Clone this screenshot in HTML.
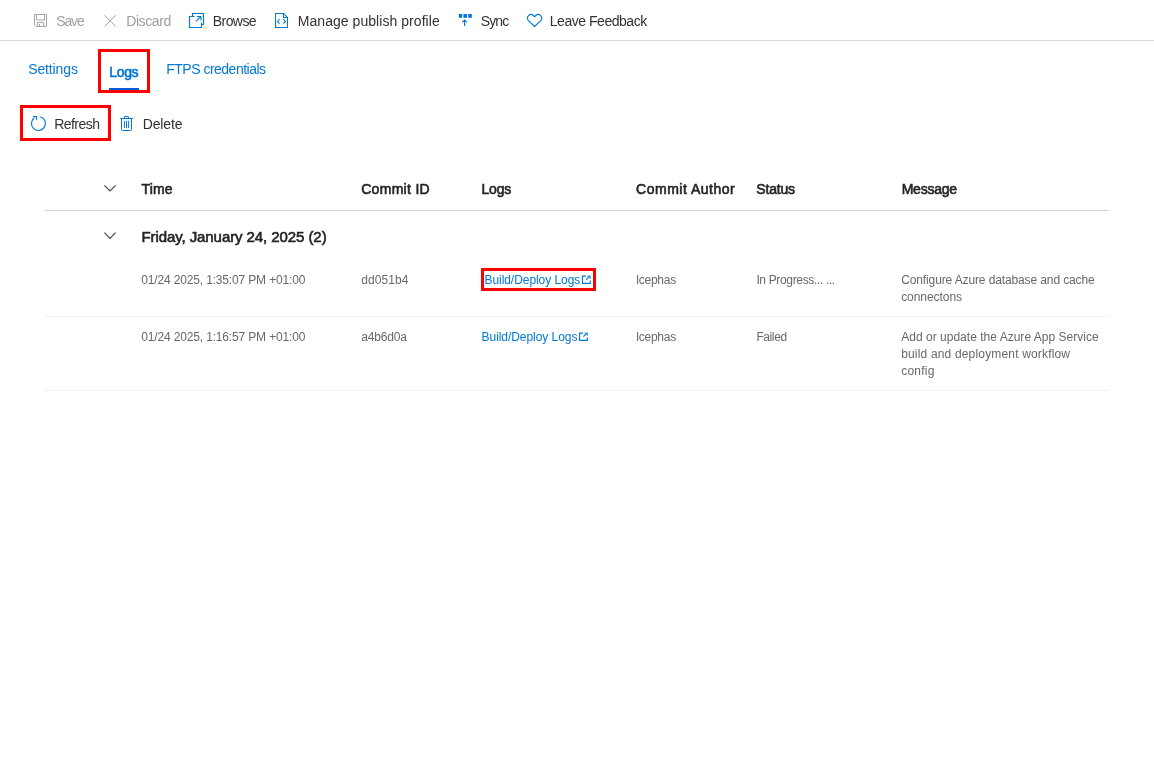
<!DOCTYPE html>
<html lang="en">
<head>
<meta charset="utf-8">
<title>Deployment Center - Logs</title>
<style>
html,body{margin:0;padding:0;background:#fff;}
body{width:1154px;height:759px;position:relative;overflow:hidden;font-family:"Liberation Sans",sans-serif;}
.t{position:absolute;white-space:pre;line-height:20px;font-family:"Liberation Sans",sans-serif;}
.t{font-weight:400}
.sb{-webkit-text-stroke:0.6px currentColor;}
.ln{position:absolute;height:1px;}
.rb{position:absolute;border:3px solid #ff0000;box-sizing:border-box;}
svg.ic{position:absolute;left:0;top:0;width:1154px;height:759px;overflow:visible;}
</style>
</head>
<body>
<div id="root" style="position:absolute;left:0;top:0;width:1154px;height:759px;will-change:transform">
<!-- toolbar separator -->
<div class="ln" style="left:0;top:40px;width:1154px;background:#d6d6d6"></div>
<!-- table lines -->
<div class="ln" style="left:45px;top:210px;width:1064px;background:#cbd3dc"></div>
<div class="ln" style="left:45px;top:316px;width:1064px;background:#f0f0f0"></div>
<div class="ln" style="left:45px;top:390px;width:1064px;background:#f0f0f0"></div>
<!-- active tab underline -->
<div style="position:absolute;left:109px;top:88px;width:30px;height:2px;background:#015cda"></div>
<!-- red highlight boxes -->
<div class="rb" style="left:98px;top:49px;width:52px;height:44px"></div>
<div class="rb" style="left:20px;top:105px;width:91px;height:36px"></div>
<div class="rb" style="left:481px;top:268px;width:115px;height:23px"></div>

<svg class="ic" viewBox="0 0 1154 759" fill="none" stroke-linecap="butt" stroke-linejoin="miter">
 <!-- save (disabled) -->
 <g stroke="#a8a6a4" stroke-width="1">
  <path d="M34.5 14.5 H46.5 V26.5 H36 L34.5 25 Z"/>
  <path d="M36.5 14.5 V20 H44.5 V14.5"/>
  <path d="M37.5 26.5 V22.5 H43.5 V26.5"/>
  <path d="M39.5 26.5 V24"/>
 </g>
 <!-- discard X (disabled) -->
 <g stroke="#a19f9d" stroke-width="1">
  <path d="M104.5 15.2 L115.7 26.4 M115.7 15.2 L104.5 26.4"/>
 </g>
 <!-- browse -->
 <g stroke="#0078d4" stroke-width="1.15">
  <path d="M194.5 16.5 H189.5 V27.5 H201.5 V22.5"/>
  <path d="M192.5 16.5 V13.5 H203.5 V24.5 H201.5"/>
  <path d="M195.8 21.4 L200.8 16.6 M197 16.5 H201 V20.5"/>
 </g>
 <!-- manage publish profile -->
 <g stroke="#0078d4" stroke-width="1.05">
  <path d="M275.5 13.5 H283.5 L287.5 17.5 V27.5 H275.5 Z"/>
  <path d="M283.5 13.5 V17.5 H287.5"/>
  <path d="M279.6 19.2 L277.5 21.4 L279.6 23.6 M283.4 19.2 L285.5 21.4 L283.4 23.6"/>
 </g>
 <!-- sync -->
 <g fill="#0078d4" stroke="none">
  <rect x="458.8" y="14" width="3.4" height="3.8"/>
  <rect x="463.4" y="14" width="3.6" height="3.8"/>
  <rect x="468.2" y="14" width="3.6" height="3.8"/>
 </g>
 <g stroke="#0078d4" stroke-width="1.15">
  <path d="M464.6 20 V26 M462.4 22.2 L464.6 20 L466.8 22.2"/>
 </g>
 <!-- heart -->
 <g stroke="#0078d4" stroke-width="1.15">
  <path d="M534.6 26.5 L528.4 20.6 C527.1 19.3 527.1 16.9 528.5 15.6 C529.9 14.2 532 14.2 533.4 15.5 L534.6 16.6 L535.8 15.5 C537.2 14.2 539.3 14.2 540.7 15.6 C542.1 16.9 542.1 19.3 540.8 20.6 Z"/>
 </g>
 <!-- refresh -->
 <g stroke="#0078d4" stroke-width="1.15">
  <path d="M40.3 116.7 A7 7 0 1 1 34.6 117.6"/>
  <path d="M33 116.5 H36.6 V119.8"/>
 </g>
 <!-- delete -->
 <g stroke="#0078d4" stroke-width="1">
  <path d="M120.2 118.5 H132.8"/>
  <path d="M124.5 118.5 V117 Q124.5 116.5 125 116.5 H128 Q128.5 116.5 128.5 117 V118.5"/>
  <path d="M121.5 118.5 V129.5 Q121.5 130.5 122.5 130.5 H130.5 Q131.5 130.5 131.5 129.5 V118.5"/>
  <path d="M124.4 120.8 V128 M126.5 120.8 V128 M128.6 120.8 V128"/>
 </g>
 <!-- chevrons -->
 <g stroke="#484644" stroke-width="1.2">
  <path d="M104.4 185.4 L110 191 L115.6 185.4"/>
  <path d="M104.4 232.7 L110 238.3 L115.6 232.7"/>
 </g>
 <!-- external-link icons -->
 <g stroke="#0078d4" stroke-width="1.15" transform="translate(2.9 -57)">
  <path d="M583 333.1 H579.6 V340.3 H587.3 V337.6"/>
  <path d="M583.3 336.7 L586.9 333.3"/>
  <path d="M584.4 333.1 H587.3 V336" stroke-opacity="0.7"/>
 </g>
 <g stroke="#0078d4" stroke-width="1.15">
  <path d="M583 333.1 H579.6 V340.3 H587.3 V337.6"/>
  <path d="M583.3 336.7 L586.9 333.3"/>
  <path d="M584.4 333.1 H587.3 V336" stroke-opacity="0.7"/>
 </g>
</svg>

<span class="t" style="left:56.16px;top:11.15px;font-size:14px;color:#a19f9d;letter-spacing:-1.081px">Save</span>
<span class="t" style="left:126.16px;top:11.15px;font-size:14px;color:#a19f9d;letter-spacing:-0.381px">Discard</span>
<span class="t" style="left:212.76px;top:11.15px;font-size:14px;color:#323130;letter-spacing:-0.561px">Browse</span>
<span class="t" style="left:297.76px;top:11.15px;font-size:14px;color:#323130;letter-spacing:0.053px">Manage publish profile</span>
<span class="t" style="left:480.76px;top:11.15px;font-size:14px;color:#323130;letter-spacing:-0.882px">Sync</span>
<span class="t" style="left:549.76px;top:11.15px;font-size:14px;color:#323130;letter-spacing:-0.465px">Leave Feedback</span>
<span class="t" style="left:28.16px;top:59.15px;font-size:14px;color:#0078d4;letter-spacing:-0.116px">Settings</span>
<span class="t sb" style="left:109.36px;top:62.15px;font-size:14px;color:#0078d4;letter-spacing:-0.393px">Logs</span>
<span class="t" style="left:166.26px;top:59.15px;font-size:14px;color:#0078d4;letter-spacing:-0.506px">FTPS credentials</span>
<span class="t" style="left:54.16px;top:113.95px;font-size:14px;color:#323130;letter-spacing:-0.525px">Refresh</span>
<span class="t" style="left:142.76px;top:113.95px;font-size:14px;color:#323130;letter-spacing:-0.138px">Delete</span>
<span class="t sb" style="left:141.46px;top:178.95px;font-size:14px;color:#252423;letter-spacing:0.162px">Time</span>
<span class="t sb" style="left:361.16px;top:178.95px;font-size:14px;color:#252423;letter-spacing:0.307px">Commit ID</span>
<span class="t sb" style="left:481.46px;top:178.95px;font-size:14px;color:#252423;letter-spacing:-0.193px">Logs</span>
<span class="t sb" style="left:636.06px;top:178.95px;font-size:14px;color:#252423;letter-spacing:0.507px">Commit Author</span>
<span class="t sb" style="left:756.36px;top:178.95px;font-size:14px;color:#252423;letter-spacing:-0.185px">Status</span>
<span class="t sb" style="left:901.66px;top:178.95px;font-size:14px;color:#252423;letter-spacing:-0.239px">Message</span>
<span class="t sb" style="left:141.40px;top:226.90px;font-size:15px;color:#252423;letter-spacing:-0.077px">Friday, January 24, 2025 (2)</span>
<span class="t" style="left:141.28px;top:270.14px;font-size:12px;color:#6a6866;letter-spacing:-0.155px">01/24 2025, 1:35:07 PM +01:00</span>
<span class="t" style="left:361.18px;top:270.14px;font-size:12px;color:#6a6866;letter-spacing:0.104px">dd051b4</span>
<span class="t" style="left:484.48px;top:270.14px;font-size:12px;color:#0078d4;letter-spacing:-0.056px">Build/Deploy Logs</span>
<span class="t" style="left:636.28px;top:270.14px;font-size:12px;color:#6a6866;letter-spacing:-0.239px">lcephas</span>
<span class="t" style="left:756.38px;top:270.14px;font-size:12px;color:#6a6866;letter-spacing:-0.345px">In Progress... ...</span>
<span class="t" style="left:901.18px;top:270.14px;font-size:12px;color:#6a6866;letter-spacing:-0.120px">Configure Azure database and cache</span>
<span class="t" style="left:901.18px;top:287.14px;font-size:12px;color:#6a6866;letter-spacing:-0.061px">connectons</span>
<span class="t" style="left:141.28px;top:327.14px;font-size:12px;color:#6a6866;letter-spacing:-0.155px">01/24 2025, 1:16:57 PM +01:00</span>
<span class="t" style="left:361.18px;top:327.14px;font-size:12px;color:#6a6866;letter-spacing:-0.180px">a4b6d0a</span>
<span class="t" style="left:481.58px;top:327.14px;font-size:12px;color:#0078d4;letter-spacing:-0.056px">Build/Deploy Logs</span>
<span class="t" style="left:636.28px;top:327.14px;font-size:12px;color:#6a6866;letter-spacing:-0.239px">lcephas</span>
<span class="t" style="left:756.38px;top:327.14px;font-size:12px;color:#6a6866;letter-spacing:-0.390px">Failed</span>
<span class="t" style="left:901.18px;top:327.14px;font-size:12px;color:#6a6866;letter-spacing:0.021px">Add or update the Azure App Service</span>
<span class="t" style="left:901.18px;top:344.14px;font-size:12px;color:#6a6866;letter-spacing:0.170px">build and deployment workflow</span>
<span class="t" style="left:901.18px;top:361.14px;font-size:12px;color:#6a6866;letter-spacing:0.222px">config</span>
</div>
</body>
</html>
